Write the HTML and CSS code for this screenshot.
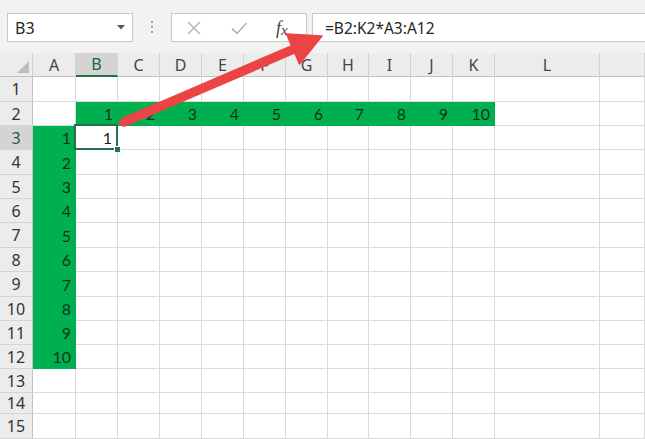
FILE: index.html
```html
<!DOCTYPE html>
<html>
<head>
<meta charset="utf-8">
<link rel="stylesheet" href="styles.css">
</head>
<body>
<div class="app">
  <div class="toolbar">
    <div class="namebox"><span>B3</span><svg class="caret" width="8" height="5" viewBox="0 0 8 5"><path d="M0 0 L8 0 L4 4.5 Z" fill="#595959"/></svg></div>
    <div class="dots"><i></i><i></i><i></i></div>
    <div class="fxbox">
      <svg class="ico" width="16" height="16" viewBox="0 0 16 16"><path d="M2 2 L14 14 M14 2 L2 14" stroke="#b9b9b9" stroke-width="1.6" fill="none"/></svg>
      <svg class="ico" width="16" height="16" viewBox="0 0 16 16"><path d="M1 8.5 L6 13.5 L15.5 3" stroke="#b9b9b9" stroke-width="1.8" fill="none"/></svg>
      <span class="fx"><i>f</i><i class="x">x</i></span>
    </div>
    <div class="formula">=B2:K2*A3:A12</div>
  </div>
  <div class="sheet">
    <div class="corner"><svg width="12" height="12" viewBox="0 0 12 12"><path d="M12 0 L12 12 L0 12 Z" fill="#bdbdbd"/></svg></div>
    <div class="h">A</div><div class="h sel">B</div><div class="h">C</div><div class="h">D</div><div class="h">E</div><div class="h">F</div><div class="h">G</div><div class="h">H</div><div class="h">I</div><div class="h">J</div><div class="h">K</div><div class="h">L</div><div class="h"></div>

    <div class="r">1</div>
    <div class="c"></div><div class="c"></div><div class="c"></div><div class="c"></div><div class="c"></div>
    <div class="c"></div><div class="c"></div><div class="c"></div><div class="c"></div><div class="c"></div>
    <div class="c"></div><div class="c"></div><div class="c"></div>

    <div class="r">2</div>
    <div class="c"></div>
    <div class="c g">1</div><div class="c g">2</div><div class="c g">3</div><div class="c g">4</div><div class="c g">5</div>
    <div class="c g">6</div><div class="c g">7</div><div class="c g">8</div><div class="c g">9</div><div class="c g">10</div>
    <div class="c"></div><div class="c"></div>

    <div class="r sel">3</div>
    <div class="c g">1</div>
    <div class="c active">1<span class="handle"></span></div>
    <div class="c"></div><div class="c"></div><div class="c"></div><div class="c"></div><div class="c"></div>
    <div class="c"></div><div class="c"></div><div class="c"></div><div class="c"></div><div class="c"></div>
    <div class="c"></div>

    <div class="r">4</div>
    <div class="c g">2</div>
    <div class="c"></div><div class="c"></div><div class="c"></div><div class="c"></div><div class="c"></div>
    <div class="c"></div><div class="c"></div><div class="c"></div><div class="c"></div><div class="c"></div>
    <div class="c"></div><div class="c"></div>

    <div class="r">5</div>
    <div class="c g">3</div>
    <div class="c"></div><div class="c"></div><div class="c"></div><div class="c"></div><div class="c"></div>
    <div class="c"></div><div class="c"></div><div class="c"></div><div class="c"></div><div class="c"></div>
    <div class="c"></div><div class="c"></div>

    <div class="r">6</div>
    <div class="c g">4</div>
    <div class="c"></div><div class="c"></div><div class="c"></div><div class="c"></div><div class="c"></div>
    <div class="c"></div><div class="c"></div><div class="c"></div><div class="c"></div><div class="c"></div>
    <div class="c"></div><div class="c"></div>

    <div class="r">7</div>
    <div class="c g">5</div>
    <div class="c"></div><div class="c"></div><div class="c"></div><div class="c"></div><div class="c"></div>
    <div class="c"></div><div class="c"></div><div class="c"></div><div class="c"></div><div class="c"></div>
    <div class="c"></div><div class="c"></div>

    <div class="r">8</div>
    <div class="c g">6</div>
    <div class="c"></div><div class="c"></div><div class="c"></div><div class="c"></div><div class="c"></div>
    <div class="c"></div><div class="c"></div><div class="c"></div><div class="c"></div><div class="c"></div>
    <div class="c"></div><div class="c"></div>

    <div class="r">9</div>
    <div class="c g">7</div>
    <div class="c"></div><div class="c"></div><div class="c"></div><div class="c"></div><div class="c"></div>
    <div class="c"></div><div class="c"></div><div class="c"></div><div class="c"></div><div class="c"></div>
    <div class="c"></div><div class="c"></div>

    <div class="r">10</div>
    <div class="c g">8</div>
    <div class="c"></div><div class="c"></div><div class="c"></div><div class="c"></div><div class="c"></div>
    <div class="c"></div><div class="c"></div><div class="c"></div><div class="c"></div><div class="c"></div>
    <div class="c"></div><div class="c"></div>

    <div class="r">11</div>
    <div class="c g">9</div>
    <div class="c"></div><div class="c"></div><div class="c"></div><div class="c"></div><div class="c"></div>
    <div class="c"></div><div class="c"></div><div class="c"></div><div class="c"></div><div class="c"></div>
    <div class="c"></div><div class="c"></div>

    <div class="r">12</div>
    <div class="c g">10</div>
    <div class="c"></div><div class="c"></div><div class="c"></div><div class="c"></div><div class="c"></div>
    <div class="c"></div><div class="c"></div><div class="c"></div><div class="c"></div><div class="c"></div>
    <div class="c"></div><div class="c"></div>

    <div class="r">13</div>
    <div class="c"></div><div class="c"></div><div class="c"></div><div class="c"></div><div class="c"></div>
    <div class="c"></div><div class="c"></div><div class="c"></div><div class="c"></div><div class="c"></div>
    <div class="c"></div><div class="c"></div><div class="c"></div>

    <div class="r">14</div>
    <div class="c"></div><div class="c"></div><div class="c"></div><div class="c"></div><div class="c"></div>
    <div class="c"></div><div class="c"></div><div class="c"></div><div class="c"></div><div class="c"></div>
    <div class="c"></div><div class="c"></div><div class="c"></div>

    <div class="r">15</div>
    <div class="c"></div><div class="c"></div><div class="c"></div><div class="c"></div><div class="c"></div>
    <div class="c"></div><div class="c"></div><div class="c"></div><div class="c"></div><div class="c"></div>
    <div class="c"></div><div class="c"></div><div class="c"></div>
  </div>
  <svg class="arrow" width="645" height="439" viewBox="0 0 645 439">
    <line x1="124" y1="122" x2="294" y2="49" stroke="#ec4343" stroke-width="9.5" stroke-linecap="round"/>
    <polygon points="322,36 286.5,34 299.5,64" fill="#ec4343" stroke="#ec4343" stroke-width="1.5" stroke-linejoin="round"/>
  </svg>
</div>
</body>
</html>
```

FILE: styles.css
```css
html, body {
  margin: 0;
  padding: 0;
  background: #ffffff;
}

body {
  font-family: "Noto Sans", "Open Sans", sans-serif;
}

.app {
  position: relative;
  width: 645px;
  height: 439px;
  overflow: hidden;
}

.toolbar {
  height: 53px;
  box-sizing: border-box;
  background: #f2f2f2;
  display: flex;
  align-items: flex-start;
  padding: 13px 0 0 7px;
}

.namebox {
  width: 126px;
  height: 29px;
  box-sizing: border-box;
  background: #fff;
  border: 1px solid #c8c8c8;
  display: flex;
  align-items: center;
  justify-content: space-between;
  padding: 0 7px 0 7px;
  font-size: 16px;
  color: #262626;
}

.dots {
  width: 38px;
  display: flex;
  flex-direction: column;
  align-items: center;
  gap: 3px;
  padding-top: 8px;
}

.dots i {
  display: block;
  width: 2px;
  height: 2px;
  background: #a0a0a0;
}

.fxbox {
  width: 136px;
  height: 29px;
  box-sizing: border-box;
  background: #fff;
  border: 1px solid #c8c8c8;
  display: flex;
  align-items: center;
  gap: 29px;
  padding-left: 14px;
}

.ico {
  display: block;
}

.fx {
  font-family: "Liberation Serif", serif;
  font-size: 18px;
  color: #444;
  line-height: 1;
  display: flex;
  align-items: baseline;
}

.fx i {
  font-style: italic;
}

.fx .x {
  font-size: 15px;
  position: relative;
  top: 1px;
}

.formula {
  margin-left: 5px;
  flex: 1;
  height: 29px;
  box-sizing: border-box;
  background: #fff;
  border: 1px solid #c8c8c8;
  border-right: none;
  padding-left: 12px;
  display: flex;
  align-items: center;
  font-size: 15.5px;
  color: #262626;
}

.sheet {
  display: grid;
  grid-template-columns: 33px 43px repeat(6, 42px) 41px repeat(3, 42px) 105px 1fr;
  grid-template-rows: 24px 25px 24px 24px 25px 24px 24px 25px 24px 25px 24px 24px 24px 24px 21px 25px;
}

.corner {
  background: #ececec;
  border-right: 1px solid #cfcfcf;
  border-bottom: 1px solid #c3c3c3;
  box-sizing: border-box;
  display: flex;
  align-items: flex-end;
  justify-content: flex-end;
  padding: 0 3px 3px 0;
}

.corner svg {
  display: block;
}

.h {
  background: #ececec;
  border-right: 1px solid #d4d4d4;
  border-bottom: 1px solid #c3c3c3;
  box-sizing: border-box;
  display: flex;
  align-items: center;
  justify-content: center;
  font-size: 16px;
  color: #444;
}

.h.sel {
  background: #d4d4d4;
  color: #21603c;
  border-bottom: 2px solid #217346;
}

.r {
  background: #ececec;
  border-right: 1px solid #c3c3c3;
  border-bottom: 1px solid #d4d4d4;
  box-sizing: border-box;
  display: flex;
  align-items: center;
  justify-content: center;
  font-size: 16px;
  color: #333;
}

.r.sel {
  background: #d4d4d4;
  color: #21603c;
}

.c {
  border-right: 1px solid #dadada;
  border-bottom: 1px solid #dadada;
  box-sizing: border-box;
  display: flex;
  align-items: center;
  justify-content: flex-end;
  padding-right: 4px;
  font-family: "Lato", "Liberation Sans", sans-serif;
  font-size: 16px;
  color: #1c1c1c;
}

.c.g {
  background: #00b050;
  border-color: #00b050;
  color: #14301d;
}

.c.active {
  position: relative;
  padding-right: 5px;
}

.c.active::after {
  content: "";
  position: absolute;
  left: -2px;
  top: -2px;
  right: -1px;
  bottom: -1px;
  border: 2px solid #217346;
}

.handle {
  position: absolute;
  right: -4px;
  bottom: -4px;
  width: 5px;
  height: 5px;
  background: #217346;
  border: 1px solid #fff;
  z-index: 2;
}

.arrow {
  position: absolute;
  left: 0;
  top: 0;
  pointer-events: none;
}
```
